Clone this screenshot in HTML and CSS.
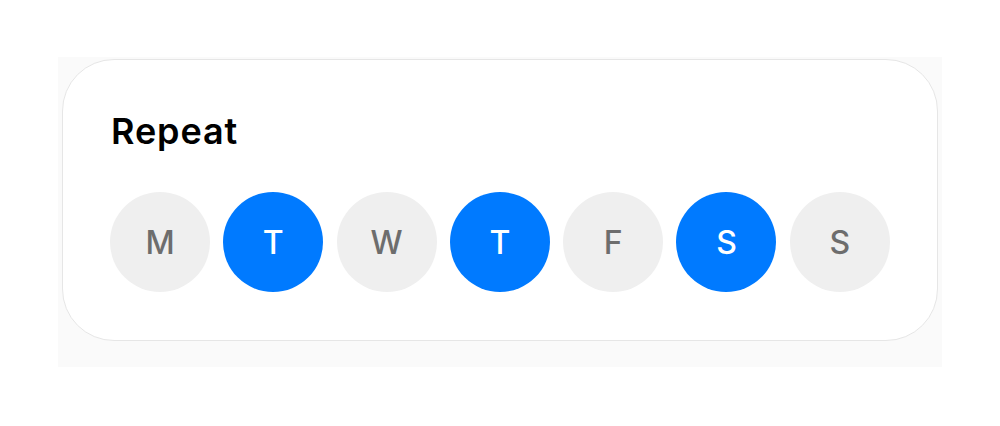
FILE: index.html
```html
<!DOCTYPE html>
<html>
<head lang="en">
    <meta charset="UTF-8">
    <title>Repeat</title>
    <link rel="stylesheet" href="styles.css">
</head>
<body>
<div class="frame">
    <div class="card">
        <h2 class="title">Repeat</h2>
        <ul class="days">
            <li class="day">M</li>
            <li class="day on">T</li>
            <li class="day">W</li>
            <li class="day on">T</li>
            <li class="day">F</li>
            <li class="day on">S</li>
            <li class="day">S</li>
        </ul>
    </div>
</div>
</body>
</html>
```

FILE: styles.css
```css
* {
    margin: 0;
    padding: 0;
    list-style: none;
}

body {
    background: #fff;
    font-family: Inter, "Liberation Sans", sans-serif;
}

.frame {
    width: 884px;
    height: 310px;
    margin: 57px 0 0 58px;
    padding: 2px 4px 0;
    box-sizing: border-box;
    background: #fafafa;
}

.card {
    height: 282px;
    box-sizing: border-box;
    padding: 48px 47px 0;
    background: #fff;
    border: 1.5px solid #e6e6e6;
    border-radius: 52px;
}

.title {
    font-size: 36px;
    font-weight: 600;
    line-height: 46px;
    color: #000;
    letter-spacing: 0.9px;
    margin-left: 1px;
}

.days {
    display: flex;
    gap: 13.3px;
    margin-top: 38px;
}

.day {
    width: 100px;
    height: 100px;
    border-radius: 50%;
    background: #efefef;
    color: #6d6d6d;
    font-size: 32px;
    font-weight: 500;
    display: flex;
    align-items: center;
    justify-content: center;
}

.day.on {
    background: #007aff;
    color: #fff;
}
```
